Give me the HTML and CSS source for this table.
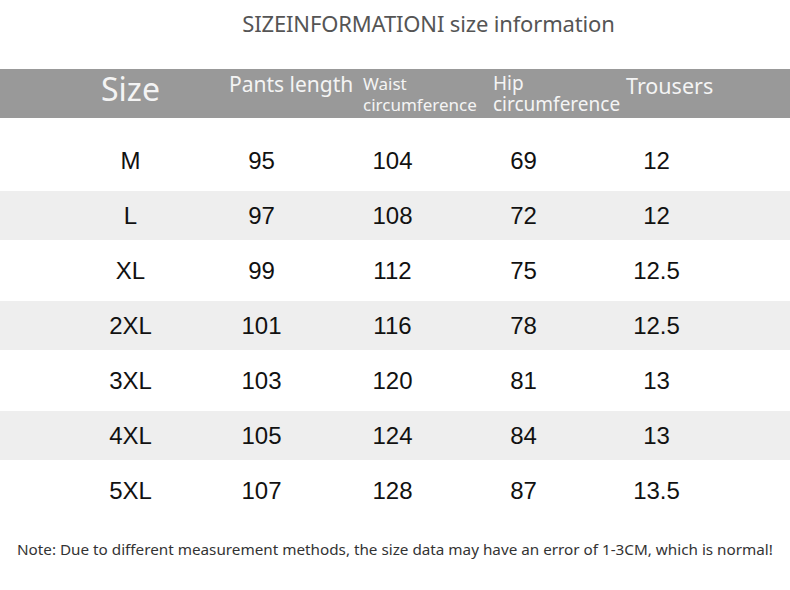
FILE: index.html
```html
<!DOCTYPE html>
<html>
<head>
<meta charset="utf-8">
<link rel="stylesheet" href="styles.css">
</head>
<body>
<div class="page">
  <div class="title">SIZEINFORMATIONI size information</div>
  <div class="head">
    <div class="hc h-size">Size</div>
    <div class="hc h-len">Pants length</div>
    <div class="hc h-waist"><div>Waist</div><div>circumference</div></div>
    <div class="hc h-hip"><div>Hip</div><div>circumference</div></div>
    <div class="hc h-tr">Trousers</div>
  </div>
  <div class="rows">
    <div class="row"><span>M</span><span>95</span><span>104</span><span>69</span><span>12</span></div>
    <div class="row alt"><span>L</span><span>97</span><span>108</span><span>72</span><span>12</span></div>
    <div class="row"><span>XL</span><span>99</span><span>112</span><span>75</span><span>12.5</span></div>
    <div class="row alt"><span>2XL</span><span>101</span><span>116</span><span>78</span><span>12.5</span></div>
    <div class="row"><span>3XL</span><span>103</span><span>120</span><span>81</span><span>13</span></div>
    <div class="row alt"><span>4XL</span><span>105</span><span>124</span><span>84</span><span>13</span></div>
    <div class="row"><span>5XL</span><span>107</span><span>128</span><span>87</span><span>13.5</span></div>
  </div>
  <div class="note">Note: Due to different measurement methods, the size data may have an error of 1-3CM, which is normal!</div>
</div>
</body>
</html>
```

FILE: styles.css
```css
html, body {
  margin: 0;
  padding: 0;
  background: #ffffff;
}
.page {
  width: 790px;
  height: 590px;
  overflow: hidden;
  font-family: "Noto Sans", sans-serif;
}
.title {
  padding-top: 10px;
  font-size: 22px;
  line-height: 26px;
  color: #555555;
  text-align: center;
  padding-left: 67px;
  letter-spacing: -0.15px;
}
.head {
  margin-top: 33px;
  height: 49px;
  background: #999999;
  display: grid;
  grid-template-columns: 131px 131px 131px 131px 135px;
  padding-left: 65px;
  color: #f4f4f4;
}
.hc {
  white-space: nowrap;
}
.h-size {
  text-align: center;
  font-size: 32px;
  line-height: 36px;
  padding-top: 2px;
}
.h-len {
  font-size: 21px;
  line-height: 24px;
  padding-top: 3px;
  padding-left: 33px;
}
.h-waist {
  font-size: 17px;
  line-height: 21px;
  padding-top: 4px;
  padding-left: 36px;
}
.h-hip {
  font-size: 19px;
  line-height: 21px;
  padding-top: 4px;
  padding-left: 35px;
}
.h-tr {
  font-size: 21.5px;
  line-height: 26px;
  padding-top: 4px;
  padding-left: 37px;
}
.rows {
  margin-top: 12px;
}
.row {
  height: 61px;
  display: grid;
  grid-template-columns: 131px 131px 131px 131px 135px;
  padding-left: 65px;
  align-items: center;
  padding-top: 1px;
  box-sizing: border-box;
  font-family: "Liberation Sans", Arial, sans-serif;
  font-size: 24px;
  color: #111111;
}
.row span {
  text-align: center;
}
.row.alt {
  height: 49px;
  background: #eeeeee;
}
.note {
  margin-top: 19px;
  padding-left: 17px;
  font-size: 15.25px;
  line-height: 18px;
  color: #333333;
  white-space: nowrap;
}
```
